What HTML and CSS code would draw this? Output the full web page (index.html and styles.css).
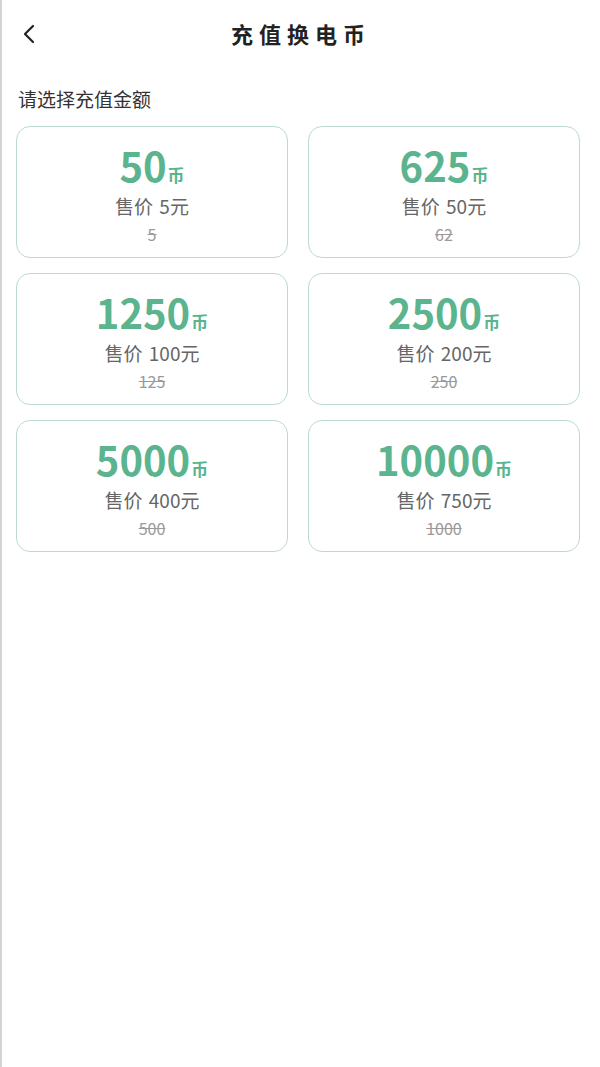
FILE: index.html
```html
<!DOCTYPE html>
<html lang="zh-CN">
  <head>
    <meta charset="UTF-8">
    <meta name="viewport" content="width=device-width, initial-scale=1.0">
    <title>充值换电币</title>
    <link rel="stylesheet" href="styles.css">
  </head>
  <body>
    <div class="page">
      <header class="nav-bar">
        <a class="back" href="#">
          <svg width="14" height="20" viewBox="0 0 14 20"><path d="M11 2 L3 10 L11 18" fill="none" stroke="#222" stroke-width="2.2" stroke-linecap="round" stroke-linejoin="round"/></svg>
        </a>
        <h1>充值换电币</h1>
      </header>
      <p class="section-title">请选择充值金额</p>
      <div class="package-grid">
        <div class="package">
          <div class="amount">50<span class="unit">币</span></div>
          <div class="price">售价 5元</div>
          <div class="origin">5</div>
        </div>
        <div class="package">
          <div class="amount">625<span class="unit">币</span></div>
          <div class="price">售价 50元</div>
          <div class="origin">62</div>
        </div>
        <div class="package">
          <div class="amount">1250<span class="unit">币</span></div>
          <div class="price">售价 100元</div>
          <div class="origin">125</div>
        </div>
        <div class="package">
          <div class="amount">2500<span class="unit">币</span></div>
          <div class="price">售价 200元</div>
          <div class="origin">250</div>
        </div>
        <div class="package">
          <div class="amount">5000<span class="unit">币</span></div>
          <div class="price">售价 400元</div>
          <div class="origin">500</div>
        </div>
        <div class="package">
          <div class="amount">10000<span class="unit">币</span></div>
          <div class="price">售价 750元</div>
          <div class="origin">1000</div>
        </div>
      </div>
    </div>
  </body>
</html>
```

FILE: styles.css
```css
:root {
  --green: #5bb48e;
  --border: #bcdad2;
  --text: #333333;
  --muted: #666666;
  --faint: #9a9a9a;
}

html,
body {
  margin: 0;
  padding: 0;
  height: 100%;
}

body {
  font-family: "Noto Sans CJK SC", "Noto Sans", sans-serif;
  background: #ffffff;
  color: var(--text);
}

.page {
  min-height: 100%;
  box-sizing: border-box;
  border-left: 2px solid #d4d4d4;
  padding: 0 20px 0 14px;
}

.nav-bar {
  position: relative;
  height: 66px;
  display: flex;
  align-items: center;
  justify-content: center;
}

.back {
  position: absolute;
  left: 6px;
  top: 24px;
  display: block;
  line-height: 0;
}

.nav-bar h1 {
  margin: 0;
  font-size: 22px;
  font-weight: bold;
  letter-spacing: 6px;
  color: #222;
  padding-left: 6px;
}

.section-title {
  margin: 18px 0 0 2px;
  font-size: 19px;
  line-height: 30px;
  color: var(--text);
}

.package-grid {
  margin-top: 12px;
  display: grid;
  grid-template-columns: 1fr 1fr;
  column-gap: 20px;
  row-gap: 15px;
}

.package {
  height: 132px;
  box-sizing: border-box;
  border: 1px solid var(--border);
  border-radius: 14px;
  display: flex;
  flex-direction: column;
  align-items: center;
  padding-top: 18px;
}

.amount {
  font-size: 40px;
  font-weight: bold;
  line-height: 40px;
  color: var(--green);
}

.unit {
  font-size: 17px;
  margin-left: 1px;
}

.price {
  font-size: 19px;
  line-height: 22px;
  color: var(--muted);
  word-spacing: 2px;
}

.origin {
  font-size: 16px;
  line-height: 22px;
  color: var(--faint);
  text-decoration: line-through;
  margin-top: 6px;
}
```
